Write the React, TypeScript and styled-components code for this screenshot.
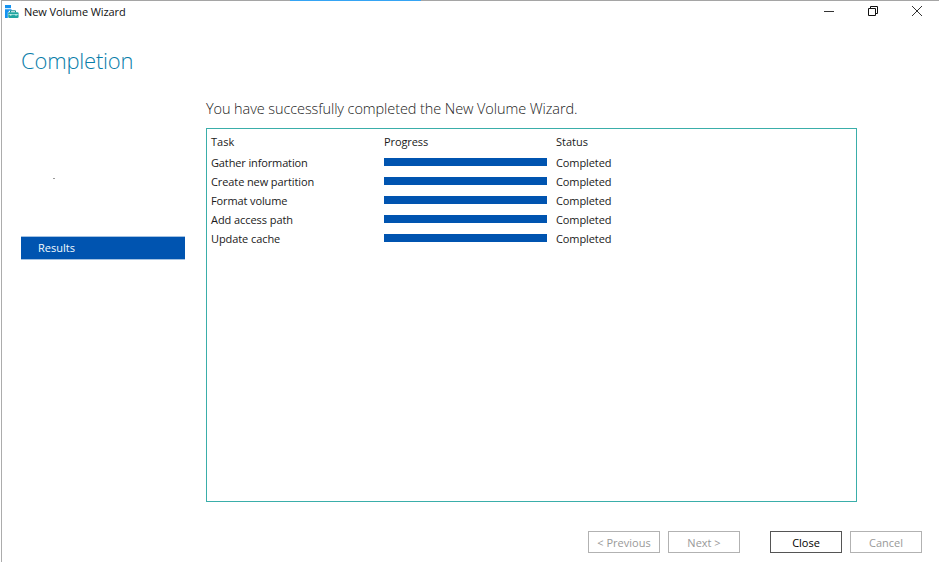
import React from 'react';
import styled, { createGlobalStyle } from 'styled-components';

const GlobalStyle = createGlobalStyle`
  * { box-sizing: border-box; }
  body { margin: 0; background: #fff; overflow: hidden; }
`;

const Window = styled.div`
  position: relative;
  width: 938px;
  height: 562px;
  margin-left: 1px;
  border-top: 1px solid #a5a5a5;
  border-left: 1px solid #acacac;
  background: #fff;
  color: #1a1a1a;
  font: 11px/16px 'Open Sans', 'Noto Sans', sans-serif;
  white-space: nowrap;
  display: flex;
  flex-direction: column;
`;

const AccentEdge = styled.div`
  position: absolute;
  top: -1px;
  left: 288px;
  width: 131px;
  height: 1px;
  background: #35a4f4;
`;

const TitleBar = styled.header`
  display: flex;
  height: 24px;
  padding-left: 2px;
`;

const AppIcon = styled.svg`
  width: 16px;
  height: 16px;
  margin-top: 3px;
`;

const TitleText = styled.span`
  margin: 3px 0 0 4px;
  font-size: 11px;
  letter-spacing: -0.09px;
  color: #111;
`;

const WindowControls = styled.div`
  display: flex;
  gap: 32px;
  margin: 4px 16px 0 auto;
  svg { width: 12px; height: 12px; display: block; }
`;

const PageTitle = styled.h1`
  margin: 19px 0 0 19px;
  height: 33px;
  font-size: 22px;
  line-height: 32px;
  font-weight: 300;
  letter-spacing: -0.2px;
  color: #087da9;
`;

const Body = styled.div`
  display: flex;
  padding-left: 19px;
  margin-top: 20px;
`;

const Sidebar = styled.nav`
  width: 164px;
  margin-right: 21px;
  display: flex;
  flex-direction: column;
`;

const Speck = styled.span`
  width: 2px;
  height: 1px;
  margin: 81px 0 0 32px;
  background: #999;
`;

const Step = styled.div`
  height: 24px;
  margin-top: 57px;
  padding-left: 17px;
  line-height: 22px;
  background: #0054b0;
  border-top: 1px solid #a4c2e2;
  border-bottom: 1px solid #a4c2e2;
  color: #f2fbff;
`;

const Main = styled.main`
  width: 651px;
`;

const Message = styled.p`
  margin: 0;
  height: 31px;
  line-height: 24px;
  font-size: 14.5px;
  font-weight: 300;
  letter-spacing: -0.09px;
  color: #222;
`;

const TaskPanel = styled.section`
  width: 651px;
  height: 374px;
  border: 1px solid #3aaeaa;
  padding: 3px 0 0 4px;
`;

const Row = styled.div<{ $head?: boolean }>`
  display: grid;
  grid-template-columns: 173px 172px 1fr;
  align-items: center;
  height: ${p => (p.$head ? '20px' : '19.1px')};
  margin-bottom: ${p => (p.$head ? '1px' : '0')};
`;

const Cell = styled.span<{ $track?: number }>`
  letter-spacing: ${p => p.$track ?? 0}px;
`;

const Bar = styled.div`
  width: 163px;
  height: 8px;
  margin-top: -2px;
  background: #0054b0;
`;

const Footer = styled.footer`
  display: flex;
  gap: 8px;
  margin: 29px 0 0 586px;
`;

const Button = styled.button<{ $active?: boolean; $track?: number }>`
  width: 72px;
  height: 22px;
  padding: 1px 0 0;
  border: 1px solid ${p => (p.$active ? '#555' : '#b2b2b2')};
  border-radius: 0;
  background: #fff;
  color: ${p => (p.$active ? '#000' : '#999')};
  font: inherit;
  letter-spacing: ${p => p.$track ?? 0}px;
  &:nth-child(3) { margin-left: 22px; }
`;

const tasks = [
  { name: 'Gather information', track: -0.13 },
  { name: 'Create new partition', track: -0.1 },
  { name: 'Format volume', track: -0.12 },
  { name: 'Add access path', track: -0.06 },
  { name: 'Update cache', track: -0.08 },
];

export default function App() {
  return (
    <>
      <GlobalStyle />
      <Window>
        <AccentEdge />
        <TitleBar>
          <AppIcon viewBox="0 0 16 16">
            <path d="M1 1h6v3.2H1z" fill="#1593f0" />
            <path d="M1 5.2h6.5v1.6H4.8v1.4H3.8V14H1z" fill="#1593f0" />
            <path d="M6.5 8.5V6.8h5v1.7" fill="none" stroke="#168c8c" />
            <rect x="4.2" y="8.2" width="10.4" height="5.8" rx="1.2" fill="#20a5a0" />
            <path d="M4.5 10.6h9.8" stroke="#b8efe7" strokeWidth=".8" />
            <path d="M6.8 10v1.8M12 10v1.8" stroke="#d9f7f2" />
          </AppIcon>
          <TitleText>New Volume Wizard</TitleText>
          <WindowControls>
            <svg viewBox="0 0 12 12"><path d="M1 6.5h10" stroke="#333" /></svg>
            <svg viewBox="0 0 12 12" fill="none" stroke="#111"><path d="M1.5 3.5h7v7h-7zM3.5 3V1.5h7v7H9" /></svg>
            <svg viewBox="0 0 12 12"><path d="M1 1l10 10M11 1L1 11" stroke="#333" /></svg>
          </WindowControls>
        </TitleBar>
        <PageTitle>Completion</PageTitle>
        <Body>
          <Sidebar>
            <Speck />
            <Step>Results</Step>
          </Sidebar>
          <Main>
            <Message>You have successfully completed the New Volume Wizard.</Message>
            <TaskPanel>
              <Row $head>
                <Cell>Task</Cell>
                <Cell $track={-0.1}>Progress</Cell>
                <Cell>Status</Cell>
              </Row>
              {tasks.map(t => (
                <Row key={t.name}>
                  <Cell $track={t.track}>{t.name}</Cell>
                  <Bar />
                  <Cell $track={-0.1}>Completed</Cell>
                </Row>
              ))}
            </TaskPanel>
          </Main>
        </Body>
        <Footer>
          <Button disabled>&lt; Previous</Button>
          <Button disabled>Next &gt;</Button>
          <Button $active>Close</Button>
          <Button disabled>Cancel</Button>
        </Footer>
      </Window>
    </>
  );
}
